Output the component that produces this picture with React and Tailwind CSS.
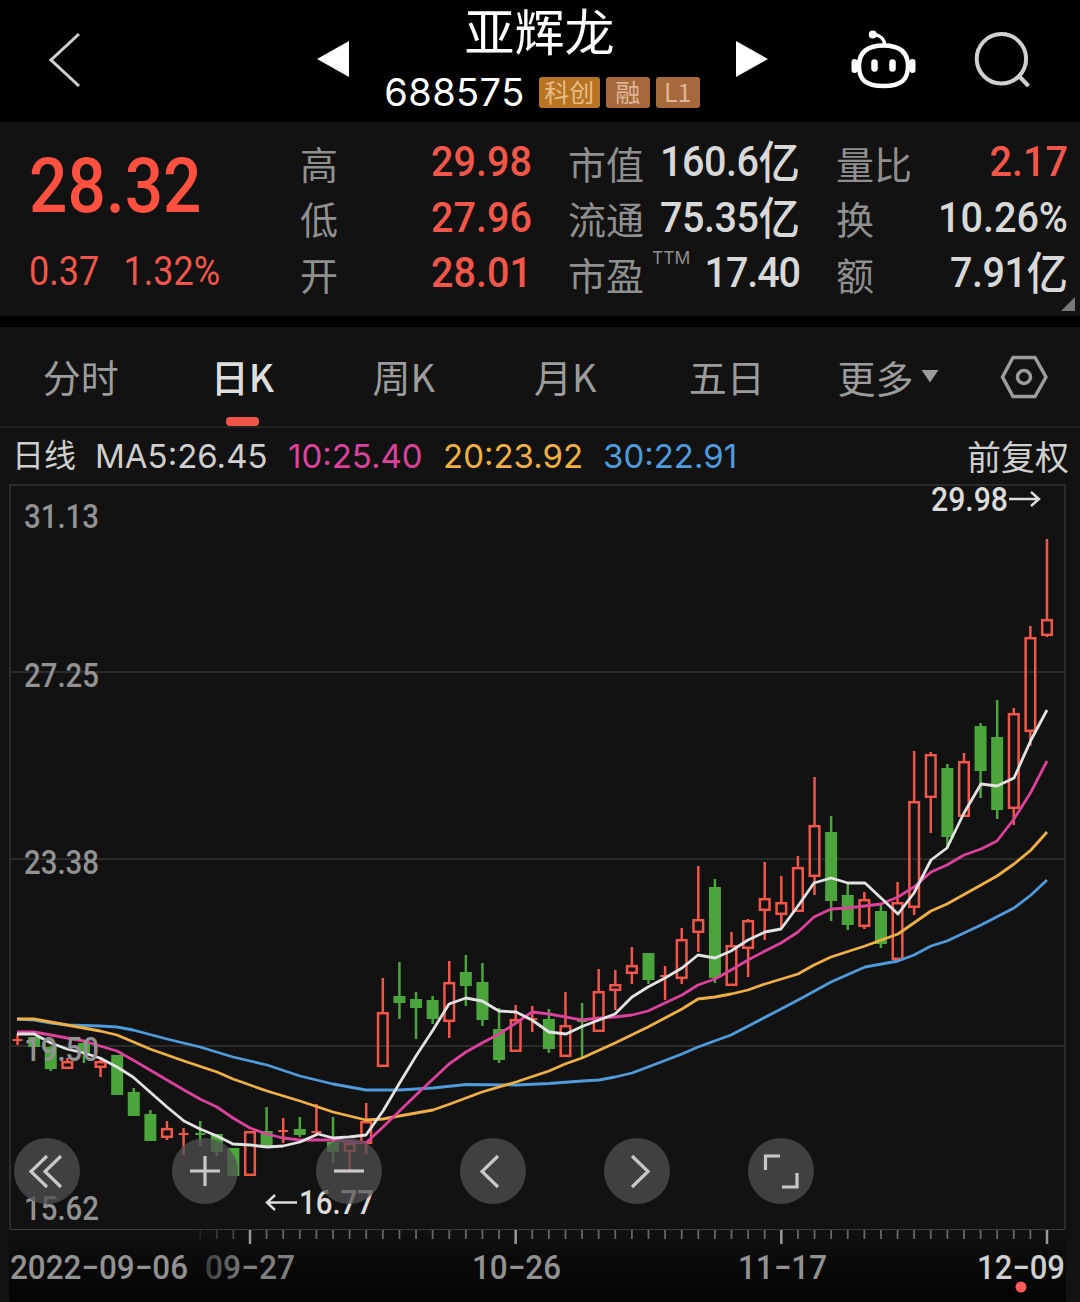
const NUM = "font-[Roboto,'Noto_Sans_CJK_SC',sans-serif] font-medium whitespace-nowrap";

const UP = "#f0564a";
const DOWN = "#4ba53c";
const STEP = 16.604;
const px = (i) => 17.54 + i * STEP;

// [high, body top, body bottom, low, rising]
const candles = [
  [1034, 1039, 1041, 1045, 1],
  [1037, 1037, 1047, 1047, 0],
  [1046, 1047, 1069, 1071, 0],
  [1058, 1061, 1069, 1069, 1],
  [1041, 1043, 1053, 1063, 0],
  [1058, 1061, 1068, 1077, 1],
  [1055, 1055, 1095, 1095, 0],
  [1088, 1092, 1116, 1116, 0],
  [1110, 1114, 1141, 1141, 0],
  [1121, 1128, 1138, 1140, 1],
  [1128, 1133, 1135, 1155, 1],
  [1121, 1133, 1135, 1146, 0],
  [1134, 1134, 1152, 1156, 0],
  [1148, 1148, 1176, 1176, 0],
  [1131, 1131, 1176, 1176, 1],
  [1107, 1131, 1146, 1148, 0],
  [1118, 1130, 1132, 1143, 1],
  [1117, 1129, 1135, 1137, 0],
  [1104, 1131, 1133, 1135, 1],
  [1117, 1142, 1152, 1163, 0],
  [1140, 1143, 1152, 1171, 1],
  [1103, 1121, 1144, 1154, 1],
  [978, 1012, 1067, 1067, 1],
  [962, 996, 1003, 1019, 0],
  [992, 999, 1008, 1039, 0],
  [996, 1000, 1019, 1024, 0],
  [961, 982, 1022, 1038, 1],
  [955, 972, 986, 1006, 0],
  [963, 982, 1020, 1026, 0],
  [1008, 1029, 1060, 1063, 0],
  [1005, 1019, 1052, 1052, 1],
  [1006, 1018, 1020, 1032, 1],
  [1009, 1019, 1049, 1053, 0],
  [992, 1025, 1057, 1057, 1],
  [1003, 1020, 1022, 1057, 0],
  [969, 991, 1032, 1032, 1],
  [970, 984, 991, 1010, 1],
  [947, 965, 974, 984, 1],
  [953, 953, 980, 984, 0],
  [966, 975, 977, 1000, 1],
  [928, 939, 979, 984, 1],
  [866, 919, 933, 952, 1],
  [879, 887, 978, 983, 0],
  [932, 945, 986, 986, 1],
  [919, 920, 949, 977, 1],
  [862, 898, 911, 940, 1],
  [876, 902, 915, 928, 1],
  [856, 867, 912, 912, 1],
  [777, 825, 877, 895, 1],
  [816, 832, 901, 921, 0],
  [883, 895, 925, 930, 0],
  [892, 899, 927, 929, 1],
  [905, 911, 944, 948, 0],
  [882, 902, 960, 960, 1],
  [751, 801, 908, 915, 1],
  [752, 754, 798, 833, 1],
  [764, 768, 837, 848, 0],
  [753, 761, 817, 817, 1],
  [723, 726, 771, 798, 0],
  [700, 737, 810, 819, 0],
  [708, 713, 809, 825, 1],
  [626, 637, 732, 746, 1],
  [539, 619, 636, 637, 1],
];

const averages = [
  {
    color: "#4f9bdc",
    points:
      "17,1019 34,1020 51,1023 67,1025 100,1026 117,1027 133,1030 167,1039 200,1047 233,1057 267,1065 300,1076 333,1084 366,1090 399,1090 433,1088 466,1084.5 516,1085 549,1083.5 582,1081 599,1080 615,1077 632,1073 648,1067 682,1054 698,1047 731,1035 781,1009 800,999 831,982 865,967 898,961 914,955 931,946 947,941 981,925 1014,908 1031,895 1047,880",
  },
  {
    color: "#eeb043",
    points:
      "17,1019 34,1019 67,1025 100,1031 117,1035 150,1049 184,1061 217,1072 233,1079 267,1091 300,1101 333,1112 366,1120 383,1119 399,1116 433,1110 450,1104 482,1092 516,1082 549,1071 565,1064 582,1058 615,1043 648,1027 682,1009 698,999 715,997 731,994 748,990 765,984 798,974 814,965 831,957 865,946 898,934 931,911 947,904 981,885 997,876 1014,864 1031,850 1047,832",
  },
  {
    color: "#dc419b",
    points:
      "17,1032 34,1032 51,1035 67,1038 84,1041 100,1046 117,1051 133,1060 150,1070 167,1080 184,1090 200,1099 217,1107 233,1118 250,1128 267,1134 283,1138 300,1140 333,1140 366,1143 383,1127 416,1095 449,1064 466,1052 482,1043 499,1034 516,1023 532,1012 549,1014 582,1020 599,1018 615,1017 632,1015 648,1011 682,995 698,985 715,979 731,970 748,960 765,951 781,943 798,932 814,917 831,909 848,908 881,904 898,897 914,887 931,872 947,865 964,855 981,849 997,841 1014,819 1031,792 1047,761",
  },
  {
    color: "#e2e2e2",
    points:
      "17,1034 34,1034 51,1043 67,1049 84,1053 100,1058 117,1067 133,1077 150,1092 167,1107 184,1121 200,1129 217,1136 233,1144 250,1145 267,1147 283,1146 300,1142 318,1134 333,1138 349,1137 366,1135 383,1111 399,1084 416,1056 433,1030 449,1004 466,998 482,1001 499,1011 516,1012 532,1020 549,1032 566,1034 582,1026.5 599,1020 615,1014 632,997 648,987 665,978 682,968 698,955 715,958 731,951 748,940 765,932 781,929 798,906 814,883 831,878 848,883 865,883 881,898 898,914 914,893 931,860 947,848 964,813 981,784 997,786 1014,778 1031,740 1047,710",
  },
];

const tabs = ["分时", "日K", "周K", "月K", "五日"];

const stats = [
  [
    { label: "高", value: "29.98", red: true },
    { label: "低", value: "27.96", red: true },
    { label: "开", value: "28.01", red: true },
  ],
  [
    { label: "市值", value: "160.6", unit: "亿" },
    { label: "流通", value: "75.35", unit: "亿" },
    { label: "市盈", sup: "TTM", value: "17.40", tight: true },
  ],
  [
    { label: "量比", value: "2.17", red: true },
    { label: "换", value: "10.26%" },
    { label: "额", value: "7.91", unit: "亿" },
  ],
];

const Tag = ({ children, className }) => (
  <span className={`flex h-[31px] items-center justify-center rounded-[3px] pb-[3px] text-[25px] leading-none ${className}`}>
    {children}
  </span>
);

const Header = () => (
  <header className="flex h-[122px] bg-black">
    <div className="flex w-[317px] pt-[31px] pl-[46px]">
      <svg width="36" height="58" viewBox="0 0 36 58" fill="none" stroke="#d0d0d0" strokeWidth="3">
        <path d="M33 3 L5 29 L33 55" />
      </svg>
    </div>
    <div className="flex w-[451px] justify-between">
      <svg className="mt-[41px]" width="32" height="36" fill="#fff">
        <path d="M32 0V36L0 18Z" />
      </svg>
      <div className="flex flex-col items-center pr-px whitespace-nowrap">
        <h1 className="h-[64px] pr-[5px] text-[50px] leading-[59px] text-white">亚辉龙</h1>
        <div className="mt-1.5 flex items-center gap-1.5">
          <span className="mr-[8px] -mt-px font-[Inter] text-[38px] leading-[46px] tracking-[0.4px] text-white">688575</span>
          <Tag className="w-[61px] bg-[#b87422] text-[#e6bd84]">科创</Tag>
          <Tag className="w-[44px] bg-[#a5693b] text-[#e0b596]">融</Tag>
          <Tag className="w-[44px] bg-[#a5693b] text-[#e0b596]">L1</Tag>
        </div>
      </div>
      <svg className="mt-[41px]" width="32" height="36" fill="#fff">
        <path d="M0 0V36L32 18Z" />
      </svg>
    </div>
    <svg className="mt-[28px] ml-[82px]" width="68" height="64" viewBox="0 0 68 64" fill="none" stroke="#fff" strokeWidth="4.5">
      <path d="M33.500 17.500C51 17.500 58 25 58 38C58 52 51 58 33.500 58C16 58 9 52 9 38C9 25 16 17.500 33.500 17.500Z" />
      <path d="M34.500 17c0-6-3-9-11-11" strokeWidth="3.5" />
      <circle cx="22.800" cy="6.500" r="4" fill="#fff" stroke="none" />
      <path d="M4.500 34v8M62.500 34v8" strokeWidth="6" strokeLinecap="round" />
      <path d="M24.500 34.500v6M42.500 34.500v6" strokeWidth="6.500" strokeLinecap="round" />
    </svg>
    <svg className="mt-[30px] ml-[54px]" width="60" height="60" fill="none" stroke="#d0d0d0" strokeWidth="4">
      <circle cx="29.400" cy="28.800" r="24.700" />
      <path d="M46 45L56.500 56" />
    </svg>
  </header>
);

const Stat = ({ label, sup, value, unit, red, tight }) => (
  <div className="flex h-[55.500px] items-center justify-between">
    <span className="flex text-[38px] leading-[55px] whitespace-nowrap text-[#8f8f8f]">
      <span className="pt-px">{label}</span>
      {sup && <span className="ml-2 h-5 font-[Inter] text-[17.500px] leading-[26px]">{sup}</span>}
    </span>
    <span
      className={`${NUM} flex w-0 origin-right scale-x-[0.92] items-center justify-end text-[43px] leading-[55px] ${red ? "text-[#f0564a]" : "text-[#d8d8d8]"} ${tight ? "tracking-[-1.2px]" : ""} ${unit ? "tracking-[-0.5px]" : ""}`}
    >
      {value}
      {unit && <span className="h-[55px] pt-[2px] text-[45px] tracking-normal">{unit}</span>}
    </span>
  </div>
);

const Quote = () => (
  <section className="relative flex h-[194px] bg-[#121212]">
    <div className={`${NUM} w-[300px] pl-[29px] text-[#f0564a]`}>
      <div className="mt-[22px] h-[84px] w-max origin-left scale-x-[0.89] text-[76px] leading-[84px] text-[#fc5040]">28.32</div>
      <div className="mt-[21px] flex w-max origin-left scale-x-[0.9] gap-[27px] text-[40px] leading-[46px] font-normal">
        <span>0.37</span>
        <span>1.32%</span>
      </div>
    </div>
    <div className="grid w-[768px] grid-cols-3 gap-x-[36px] pt-[12px]">
      {stats.map((col, i) => (
        <div key={i}>
          {col.map((s) => (
            <Stat key={s.label} {...s} />
          ))}
        </div>
      ))}
    </div>
    <svg className="absolute right-[5px] bottom-[5px]" width="14" height="14" fill="#777">
      <path d="M14 0V14H0Z" />
    </svg>
  </section>
);

const Tabs = () => (
  <nav className="mt-[11px] flex h-[101px] border-b-2 border-[#222] bg-[#121212] text-[38px] leading-[98px] text-[#9c9c9c]">
    {tabs.map((t) => (
      <div key={t} className={`relative w-[161.500px] text-center ${t === "日K" ? "font-medium text-[#dedede]" : ""}`}>
        {t}
        {t === "日K" && <span className="absolute bottom-0 left-[64px] h-[9px] w-[33px] rounded-[4px] bg-[#f0564a]" />}
      </div>
    ))}
    <div className="flex w-[192.500px] items-center pl-[30px]">
      更多
      <svg className="ml-[7px]" width="18" height="13" fill="#9c9c9c">
        <path d="M0.500 0H17.500L9 12.500Z" />
      </svg>
    </div>
    <svg className="mt-[28px]" width="48" height="44" fill="none" stroke="#9c9c9c" strokeWidth="3.5">
      <path d="M13 2.500H35L46 22L35 41.500H13L2.500 22Z" />
      <circle cx="24" cy="22" r="6.500" />
    </svg>
  </nav>
);

const Legend = () => (
  <div className="flex h-[56px] items-center bg-[#121212] pr-[11px] pl-[12px] font-[Inter,'Noto_Sans_CJK_SC',sans-serif] text-[33px] leading-[56px] whitespace-nowrap text-[#cfcfcf]">
    <span className="w-[83px] text-[32px]">日线</span>
    <span className="w-[193px]">MA5:26.45</span>
    <span className="w-[155px] text-[#dc419b]">10:25.40</span>
    <span className="w-[160px] text-[#eeb043]">20:23.92</span>
    <span className="text-[#4f9bdc]">30:22.91</span>
    <span className="ml-auto pt-[3px] text-[34px]">前复权</span>
  </div>
);

const ChartText = ({ x, y, w, fill = "#929292", children }) => (
  <text
    x={x}
    y={y}
    textLength={w}
    lengthAdjust="spacingAndGlyphs"
    fill={fill}
    className="font-[Roboto,sans-serif] text-[33.500px] font-medium"
  >
    {children}
  </text>
);

const Candle = ({ i, c }) => {
  const [high, top, bottom, low, up] = c;
  const x = px(i);
  const color = up ? UP : DOWN;
  const hollow = up && bottom - top > 3;
  return (
    <g stroke={color} strokeWidth="2.5" fill={hollow ? "none" : color}>
      <path d={`M${x} ${high}V${top}M${x} ${bottom}V${low}`} />
      {hollow ? (
        <rect x={x - 4.8} y={top + 1.2} width="9.6" height={bottom - top - 2.4} />
      ) : (
        <rect
          x={up || bottom - top < 3 ? x - 5 : x - 6}
          y={top}
          width={up || bottom - top < 3 ? 10 : 12}
          height={bottom - top}
          stroke="none"
        />
      )}
    </g>
  );
};

const buttons = [
  { left: "left-[14px]", d: "M33 18L17 33.500L33 49M47 18L31 33.500L47 49" },
  { left: "left-[172px]", d: "M18 33H48M33 18V48" },
  { left: "left-[316px]", d: "M18 33H48" },
  { left: "left-[460px]", d: "M38 18L22 33.500L38 49" },
  { left: "left-[604px]", d: "M28 18L44 33.500L28 49" },
  { left: "left-[748px]", d: "M17.500 32V18H32M34 49H49V35" },
];

const Chart = () => (
  <main className="relative h-[818px] bg-[#121212]">
    <svg width="1080" height="818" viewBox="0 484 1080 818" className="block overflow-visible">
      <defs>
        <linearGradient id="axis" x1="0" y1="0" x2="0" y2="1">
          <stop offset="0" stopColor="#111" />
          <stop offset="0.6" stopColor="#080808" />
          <stop offset="1" stopColor="#040404" />
        </linearGradient>
        <linearGradient id="fade">
          <stop offset="0" stopColor="#3c3c3c" />
          <stop offset="0.45" stopColor="#808080" />
        </linearGradient>
      </defs>
      <rect x="9" y="1230" width="1057" height="72" fill="url(#axis)" />
      <g stroke="#2b2b2b" strokeWidth="2" fill="none">
        <path d="M10 1229V485H1065V1229M10 672H1065M10 859H1065M10 1046H1065" />
        <path d="M10 1229.500H1065" stroke="#3a3a3a" strokeWidth="1" />
      </g>
      {candles.map((c, i) => (
        <Candle key={i} i={i} c={c} />
      ))}
      {averages.map((a) => (
        <polyline key={a.color} points={a.points} fill="none" stroke={a.color} strokeWidth="2.8" strokeLinejoin="round" />
      ))}

      {/* price scale */}
      <ChartText x={24} y={528} w={75}>31.13</ChartText>
      <ChartText x={24} y={687} w={75}>27.25</ChartText>
      <ChartText x={24} y={874} w={75}>23.38</ChartText>
      <ChartText x={24} y={1061} w={75}>19.50</ChartText>
      <ChartText x={24} y={1220} w={75}>15.62</ChartText>

      {/* high / low marks */}
      <ChartText x={931} y={511} w={77} fill="#dcdcdc">29.98</ChartText>
      <path d="M1009 499H1039M1031 492L1039 499L1031 506" fill="none" stroke="#dcdcdc" strokeWidth="2.4" />
      <ChartText x={299} y={1214} w={75} fill="#dcdcdc">16.77</ChartText>
      <path d="M297 1202.500H267M275 1195L267 1202.500L275 1210" fill="none" stroke="#dcdcdc" strokeWidth="2.4" />

      {/* time scale */}
      {candles.map((_, i) => {
        if (i < 11) return null;
        const major = i === 14 || i === 30 || i === 46 || i === 62;
        return (
          <path
            key={i}
            d={`M${px(i)} 1230V${major ? 1244 : 1239}`}
            stroke={major ? "#9a9a9a" : "#666"}
            strokeWidth={major ? 2.5 : 1.8}
            opacity={i < 14 ? (i - 10) * 0.22 : 1}
          />
        );
      })}
      <ChartText x={10} y={1279} w={178}>2022−09−06</ChartText>
      <ChartText x={205} y={1279} w={90} fill="url(#fade)">09−27</ChartText>
      <ChartText x={472} y={1279} w={89}>10−26</ChartText>
      <ChartText x={738} y={1279} w={89}>11−17</ChartText>
      <ChartText x={977} y={1279} w={88} fill="#d0d0d0">12−09</ChartText>
      <circle cx="1021" cy="1287" r="5.500" fill="#f95c58" />
    </svg>
    {buttons.map((b) => (
      <button key={b.left} className={`absolute top-[654px] size-[66px] rounded-full bg-[#505050]/75 ${b.left}`}>
        <svg width="66" height="66" fill="none" stroke="#c8c8c8" strokeWidth="3.2">
          <path d={b.d} />
        </svg>
      </button>
    ))}
  </main>
);

export default function App() {
  return (
    <div className="h-[1302px] w-[1080px] overflow-hidden bg-black font-['Noto_Sans_CJK_SC',sans-serif]">
      <Header />
      <Quote />
      <Tabs />
      <Legend />
      <Chart />
    </div>
  );
}
